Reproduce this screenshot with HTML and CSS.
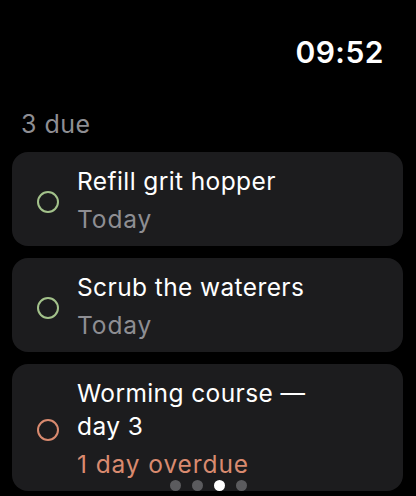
FILE: index.html
```html
<!DOCTYPE html>
<html>
<head>
<meta charset="utf-8">
<link rel="stylesheet" href="styles.css">
</head>
<body>
<div class="screen">
  <header class="status"><span class="time">09:52</span></header>
  <div class="section">3 due</div>
  <div class="list">
    <div class="card">
      <span class="ring ok"></span>
      <div class="text">
        <div class="title">Refill grit hopper</div>
        <div class="sub">Today</div>
      </div>
    </div>
    <div class="card">
      <span class="ring ok"></span>
      <div class="text">
        <div class="title">Scrub the waterers</div>
        <div class="sub">Today</div>
      </div>
    </div>
    <div class="card">
      <span class="ring late"></span>
      <div class="text">
        <div class="title">Worming course —<br>day 3</div>
        <div class="sub late">1 day overdue</div>
      </div>
    </div>
  </div>
  <div class="pager">
    <span class="dot"></span><span class="dot"></span><span class="dot on"></span><span class="dot"></span>
  </div>
</div>
</body>
</html>
```
FILE: styles.css
```css
html, body {
  margin: 0;
  padding: 0;
  background: #000;
}
body {
  font-family: Inter, "Noto Sans", sans-serif;
  color: #fff;
  width: 416px;
  height: 496px;
  overflow: hidden;
}
.screen {
  position: relative;
  height: 496px;
}
.status {
  display: flex;
  justify-content: flex-end;
  padding: 33px 32px 0 0;
  height: 48px;
}
.time {
  font-size: 30px;
  font-weight: 600;
  line-height: 38px;
  letter-spacing: 0.5px;
}
.section {
  padding: 28px 0 0 21px;
  font-size: 25px;
  line-height: 30px;
  letter-spacing: 0.5px;
  color: #8e8e93;
}
.list {
  display: flex;
  flex-direction: column;
  gap: 12px;
  padding: 13px 13px 0 12px;
}
.card {
  display: flex;
  align-items: center;
  background: #1c1c1e;
  border-radius: 16px;
  padding: 13px 12px 8px 25px;
}
.ring {
  flex: none;
  box-sizing: border-box;
  width: 22px;
  height: 22px;
  border-radius: 50%;
  border: 2px solid #a3c28b;
  margin-right: 18px;
}
.ring.late {
  border-color: #d98a6f;
}
.title {
  font-size: 24.5px;
  line-height: 33px;
  letter-spacing: 0.4px;
}
.sub {
  font-size: 24.5px;
  line-height: 37px;
  padding-top: 3px;
  letter-spacing: 0.9px;
  color: #8e8e93;
}
.sub.late {
  color: #d98a6f;
}
.pager {
  position: absolute;
  left: 0;
  right: 0;
  bottom: 5px;
  display: flex;
  justify-content: center;
  gap: 11px;
}
.dot {
  width: 11px;
  height: 11px;
  border-radius: 50%;
  background: #5b5b5e;
}
.dot.on {
  background: #fff;
}
```
